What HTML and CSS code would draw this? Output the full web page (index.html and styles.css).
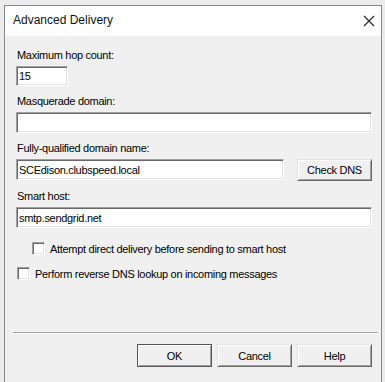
FILE: index.html
```html
<!DOCTYPE html>
<html lang="en">
<head>
    <meta charset="UTF-8">
    <title>Advanced Delivery</title>
    <link rel="stylesheet" href="styles.css">
</head>
<body>
    <div class="window">
        <div class="titlebar">
            <span class="title">Advanced Delivery</span>
            <svg class="close" width="12" height="12" viewBox="0 0 12 12">
                <path d="M1 1L11 11M11 1L1 11" stroke="#222" stroke-width="1.1" fill="none"/>
            </svg>
        </div>

        <form class="content">
            <div class="group">
                <label for="hops">Maximum hop count:</label>
                <input type="text" id="hops" class="field short" value="15">
            </div>

            <div class="group">
                <label for="masq">Masquerade domain:</label>
                <input type="text" id="masq" class="field">
            </div>

            <div class="group">
                <label for="fqdn">Fully-qualified domain name:</label>
                <div class="row">
                    <input type="text" id="fqdn" class="field grow" value="SCEdison.clubspeed.local">
                    <button type="button" class="btn">Check DNS</button>
                </div>
            </div>

            <div class="group">
                <label for="smart">Smart host:</label>
                <input type="text" id="smart" class="field" value="smtp.sendgrid.net">
            </div>

            <div class="check indent">
                <span class="box"></span>
                <span>Attempt direct delivery before sending to smart host</span>
            </div>

            <div class="check">
                <span class="box"></span>
                <span>Perform reverse DNS lookup on incoming messages</span>
            </div>

            <div class="separator"></div>

            <div class="buttons">
                <button type="button" class="btn default">OK</button>
                <button type="button" class="btn">Cancel</button>
                <button type="button" class="btn">Help</button>
            </div>
        </form>
    </div>
</body>
</html>
```

FILE: styles.css
```css
body {
    margin: 0;
    background-color: #ececec;
    font-family: "Liberation Sans", Arial, sans-serif;
    font-size: 11px;
    letter-spacing: -0.3px;
    color: #000;
}

.window {
    width: 376px;
    height: 380px;
    margin: 5px 0 0 4px;
    border: 1px solid #888;
    border-bottom: none;
    background-color: #f0f0f0;
}

.titlebar {
    height: 30px;
    background: #fff;
    display: flex;
    align-items: center;
    justify-content: space-between;
    padding: 0 6px 0 8px;
}

.title {
    font-size: 12px;
    letter-spacing: 0;
    color: #111;
    padding-bottom: 2px;
}

.close {
    margin-bottom: 1px;
}

.content {
    padding: 13px 9px 0 11px;
}

.group {
    margin-bottom: 9px;
}

label {
    display: block;
    line-height: 13px;
    margin-bottom: 4px;
    padding-left: 1px;
}

.field {
    display: block;
    box-sizing: border-box;
    width: 100%;
    height: 21px;
    margin: 0;
    padding: 0 2px;
    font-family: inherit;
    font-size: 11px;
    letter-spacing: -0.3px;
    background: #fff;
    border: 1px solid;
    border-color: #a0a0a0 #fff #fff #a0a0a0;
    box-shadow: inset 1px 1px 0 #696969, inset -1px -1px 0 #e3e3e3;
    outline: none;
}

.short {
    width: 52px;
    height: 20px;
}

.row {
    display: flex;
    gap: 13px;
}

.grow {
    flex: 1;
}

.btn {
    box-sizing: border-box;
    width: 75px;
    height: 23px;
    margin: 0;
    padding: 0;
    font-family: inherit;
    font-size: 11px;
    letter-spacing: -0.3px;
    color: #000;
    background: #f0f0f0;
    border: 1px solid;
    border-color: #e3e3e3 #696969 #696969 #e3e3e3;
    box-shadow: inset 1px 1px 0 #fff, inset -1px -1px 0 #a0a0a0;
}

.row .btn {
    height: 22px;
}

.default {
    border: 1px solid #555;
}

.check {
    display: flex;
    align-items: center;
    gap: 5px;
    height: 13px;
    margin-top: 12px;
    padding-left: 1px;
}

.check.indent {
    margin-top: 14px;
    padding-left: 16px;
}

.box {
    box-sizing: border-box;
    width: 13px;
    height: 13px;
    background: #fff;
    border: 1px solid;
    border-color: #a0a0a0 #fff #fff #a0a0a0;
    box-shadow: inset 1px 1px 0 #696969, inset -1px -1px 0 #e3e3e3;
}

.separator {
    margin: 52px -6px 0 -3px;
    height: 1px;
    background: #a0a0a0;
    border-bottom: 1px solid #fff;
}

.buttons {
    display: flex;
    justify-content: flex-end;
    gap: 5px;
    margin-top: 10px;
}
```
